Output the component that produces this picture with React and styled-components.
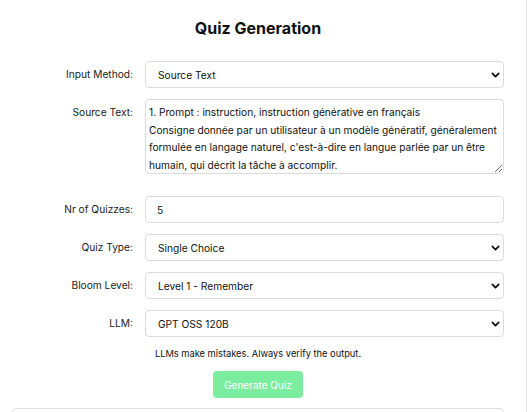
import React from "react";
import styled, { createGlobalStyle } from "styled-components";

const FONT = `Inter, "Noto Sans", "Liberation Sans", sans-serif`;

const Global = createGlobalStyle`
  html, body { margin: 0; padding: 0; background: #fff; }
  body { font-family: ${FONT}; color: #111; }
  * { box-sizing: border-box; }
`;

const Page = styled.div`
  width: 527px;
  height: 412px;
  overflow: hidden;
  border-right: 1px solid #e6e6e6;
  padding: 0 22px 0 12px;
`;

const Title = styled.h1`
  margin: 0;
  padding-top: 18px;
  height: 61px;
  text-align: center;
  font-size: 16px;
  font-weight: 700;
  line-height: 20px;
  color: #111;
`;

const Form = styled.div`
  display: flex;
  flex-direction: column;
  gap: 11px;
`;

const Row = styled.div`
  display: grid;
  grid-template-columns: 121px 1fr;
  column-gap: 12px;
  margin-bottom: ${(p) => (p.$extra ? "11px" : "0")};
`;

const Label = styled.label`
  text-align: right;
  font-size: 10.2px;
  line-height: 26px;
  color: #222;
  align-self: start;
`;

const fieldBase = `
  width: 100%;
  border: 1px solid #dcdce0;
  border-radius: 4px;
  background: #fff;
  font-family: ${FONT};
  font-size: 10.2px;
  color: #111;
  outline: none;
`;

const SelectWrap = styled.div`
  position: relative;
`;

const Select = styled.select`
  ${fieldBase}
  height: 27px;
  padding: 0 24px 0 12px;
  appearance: none;
  -webkit-appearance: none;
`;

const Chevron = styled.svg`
  position: absolute;
  right: 4px;
  top: 50%;
  width: 9px;
  height: 9px;
  transform: translateY(-50%);
  pointer-events: none;
`;

const Input = styled.input`
  ${fieldBase}
  height: 27px;
  padding: 0 11px;
`;

const TextArea = styled.textarea`
  ${fieldBase}
  display: block;
  height: 75px;
  padding: 4px 3px 0;
  line-height: 17.5px;
  resize: vertical;
  overflow: hidden;
`;

const Note = styled.p`
  margin: 10px 0 0;
  text-align: center;
  font-size: 9.3px;
  line-height: 13px;
  color: #111;
`;

const ButtonRow = styled.div`
  display: flex;
  justify-content: center;
  margin-top: 11px;
`;

const Button = styled.button`
  width: 90px;
  height: 27px;
  border: none;
  border-radius: 4px;
  background: #7bed9f;
  color: #fff;
  font-family: ${FONT};
  font-size: 10px;
  cursor: not-allowed;
`;

const Card = styled.div`
  margin-top: 10px;
  height: 40px;
  border: 1px solid #dcdce0;
  border-radius: 4px;
`;

function Field({ value, options }) {
  return (
    <SelectWrap>
      <Select defaultValue={value}>
        {options.map((o) => (
          <option key={o}>{o}</option>
        ))}
      </Select>
      <Chevron viewBox="0 0 10 10">
        <path d="M1.5 3.2 L5 6.7 L8.5 3.2" fill="none" stroke="#111" strokeWidth="2" strokeLinecap="round" strokeLinejoin="round" />
      </Chevron>
    </SelectWrap>
  );
}

const source = `1. Prompt : instruction, instruction générative en français
Consigne donnée par un utilisateur à un modèle génératif, généralement formulée en langage naturel, c'est-à-dire en langue parlée par un être humain, qui décrit la tâche à accomplir.`;

export default function App() {
  return (
    <>
      <Global />
      <Page>
        <Title>Quiz Generation</Title>
        <Form>
          <Row>
            <Label>Input Method:</Label>
            <Field value="Source Text" options={["Source Text", "File Upload", "URL"]} />
          </Row>
          <Row $extra>
            <Label>Source Text:</Label>
            <TextArea defaultValue={source} />
          </Row>
          <Row>
            <Label>Nr of Quizzes:</Label>
            <Input type="text" defaultValue="5" />
          </Row>
          <Row>
            <Label>Quiz Type:</Label>
            <Field value="Single Choice" options={["Single Choice", "Multiple Choice", "True / False"]} />
          </Row>
          <Row>
            <Label>Bloom Level:</Label>
            <Field value="Level 1 - Remember" options={["Level 1 - Remember", "Level 2 - Understand", "Level 3 - Apply"]} />
          </Row>
          <Row>
            <Label>LLM:</Label>
            <Field value="GPT OSS 120B" options={["GPT OSS 120B", "GPT OSS 20B"]} />
          </Row>
        </Form>
        <Note>LLMs make mistakes. Always verify the output.</Note>
        <ButtonRow>
          <Button disabled>Generate Quiz</Button>
        </ButtonRow>
        <Card />
      </Page>
    </>
  );
}
